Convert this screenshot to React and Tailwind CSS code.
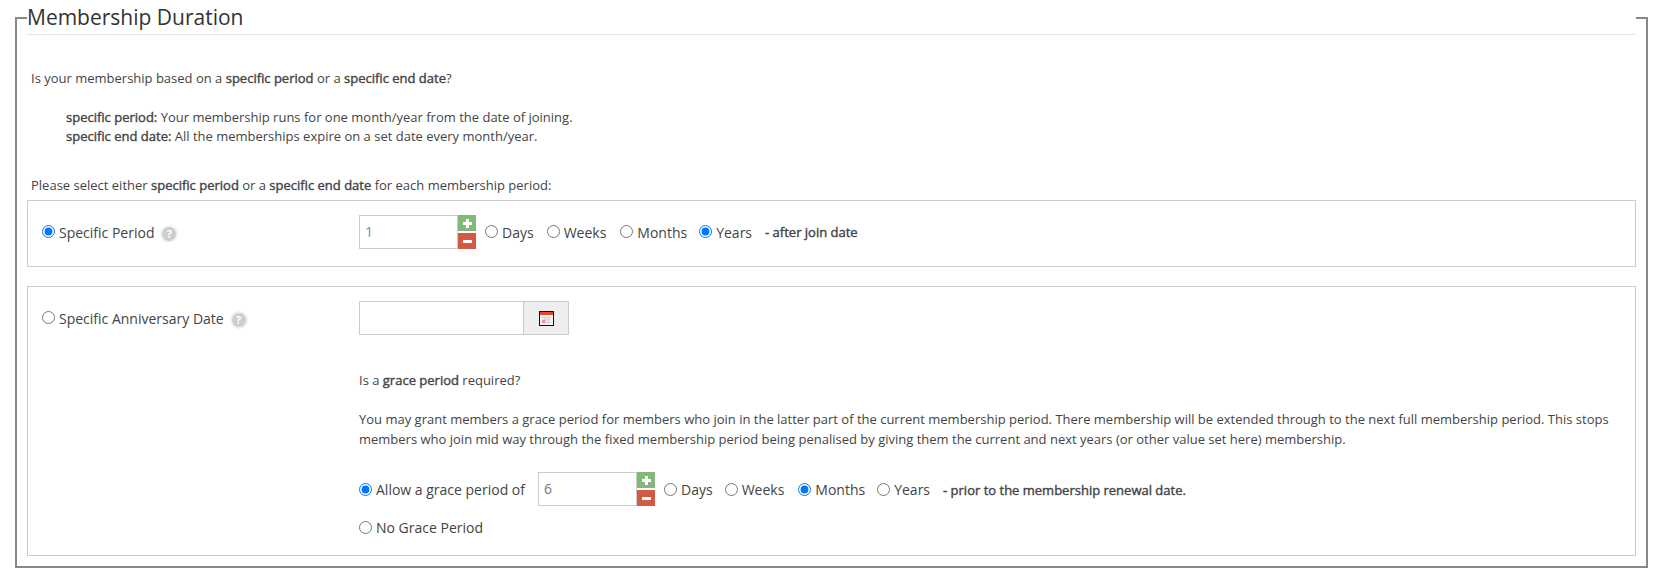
function Strong({ children }) {
  return <b className="font-normal [-webkit-text-stroke:0.4px_#444]">{children}</b>;
}

function Radio({ checked, name, label, className = '' }) {
  return (
    <label className={`flex items-center text-[14px] ${className}`}>
      <input type="radio" name={name} defaultChecked={checked} className="m-0 h-[13px] w-[13px] shrink-0" />
      <span className="ml-[4px] translate-y-px">{label}</span>
    </label>
  );
}

function Help() {
  return (
    <span className="ml-[6px] mt-[4px] flex h-[18px] w-[18px] items-center justify-center rounded-full bg-[#f1f1f1]">
      <span className="flex h-[14px] w-[14px] items-center justify-center rounded-full bg-[#cdcdcd] text-[11px] font-bold leading-none text-white">?</span>
    </span>
  );
}

function Spinner({ value, color }) {
  return (
    <div className="flex h-[34px]">
      <input readOnly value={value} className={`h-[34px] w-[99px] border border-[#ccc] pb-[2px] pl-[5px] text-[14px] outline-none ${color}`} />
      <div className="flex w-[18px] flex-col justify-between">
        <button className="flex h-[16px] items-center justify-center bg-[#85b67c]">
          <svg width="9" height="9" viewBox="0 0 9 9"><path d="M3 0h3v3h3v3H6v3H3V6H0V3h3z" fill="#fff" /></svg>
        </button>
        <button className="flex h-[16px] items-center justify-center bg-[#d25a44]">
          <svg width="9" height="3" viewBox="0 0 9 3"><rect width="9" height="3" fill="#fff" /></svg>
        </button>
      </div>
    </div>
  );
}

function CalendarIcon() {
  return (
    <svg width="15" height="15" viewBox="0 0 15 15" className="mt-px ml-px">
      <rect x="0.5" y="0.5" width="14" height="14" fill="#f4f4f4" stroke="#111" />
      <rect x="1" y="1" width="13" height="3" fill="#e8452a" />
      <path d="M3 6.5h9M3 9h9M3 11.5h9M6 5.5v7M9 5.5v7" stroke="#cfcfcf" strokeWidth="1" />
      <rect x="3" y="9" width="3" height="3" fill="#e89a90" />
    </svg>
  );
}

export default function App() {
  return (
    <div className="h-[581px] bg-white pl-[15px] pr-[14px] pt-px text-[13px] leading-[20px] text-[#444]" style={{ fontFamily: '"Open Sans", sans-serif' }}>
      <fieldset className="h-[567px] border-2 border-[#888] pl-[10px] pr-[10px]">
        <legend className="h-[34px] w-[1609px] border-b border-[#e5e5e5] text-[21px] leading-[32px] text-[#333]">Membership Duration</legend>

        <p className="ml-[4px] mt-[33px]">Is your membership based on a <Strong>specific period</Strong> or a <Strong>specific end date</Strong>?</p>
        <div className="ml-[39px] mt-[20px] leading-[19px]">
          <p><Strong>specific period:</Strong> Your membership runs for one month/year from the date of joining.</p>
          <p><Strong>specific end date:</Strong> All the memberships expire on a set date every month/year.</p>
        </div>
        <p className="ml-[4px] mt-[29px]">Please select either <Strong>specific period</Strong> or a <Strong>specific end date</Strong> for each membership period:</p>

        <div className="mt-[5px] flex h-[67px] w-[1609px] border border-[#ccc] pl-[14px] pt-[14px]">
          <div className="flex h-[33px] w-[317px] items-center">
            <Radio name="type" checked label="Specific Period" />
            <Help />
          </div>
          <Spinner value="1" color="text-[#6f8fb5]" />
          <div className="ml-[9px] flex h-[33px] items-center">
            <Radio name="unit" label="Days" className="mr-[13px]" />
            <Radio name="unit" label="Weeks" className="mr-[14px]" />
            <Radio name="unit" label="Months" className="mr-[12px]" />
            <Radio name="unit" checked label="Years" className="mr-[13px]" />
            <span className="mt-px"><Strong>- after join date</Strong></span>
          </div>
        </div>

        <div className="mt-[19px] h-[270px] w-[1609px] border border-[#ccc] pl-[14px] pr-[18px] pt-[14px]">
          <div className="flex">
            <div className="flex h-[33px] w-[317px] shrink-0 items-center">
              <Radio name="type" label="Specific Anniversary Date" />
              <Help />
            </div>
            <div className="min-w-0 flex-1">
              <div className="flex h-[34px] w-[210px] border border-[#ccc]">
                <input readOnly className="min-w-0 flex-1 outline-none" />
                <span className="flex w-[45px] items-center justify-center border-l border-[#ccc] bg-[#eee]"><CalendarIcon /></span>
              </div>
              <p className="mt-[35px]">Is a <Strong>grace period</Strong> required?</p>
              <p className="mt-[19px]">You may grant members a grace period for members who join in the latter part of the current membership period. There membership will be extended through to the next full membership period. This stops members who join mid way through the fixed membership period being penalised by giving them the current and next years (or other value set here) membership.</p>
              <div className="mt-[23px] flex h-[34px] items-center">
                <Radio name="grace" checked label="Allow a grace period of" className="mr-[13px]" />
                <Spinner value="6" color="text-[#777]" />
                <div className="ml-[9px] flex items-center">
                  <Radio name="graceUnit" label="Days" className="mr-[12px]" />
                  <Radio name="graceUnit" label="Weeks" className="mr-[14px]" />
                  <Radio name="graceUnit" checked label="Months" className="mr-[12px]" />
                  <Radio name="graceUnit" label="Years" className="mr-[13px]" />
                  <span className="mt-px"><Strong>- prior to the membership renewal date.</Strong></span>
                </div>
              </div>
              <Radio name="grace" label="No Grace Period" className="mt-[11px]" />
            </div>
          </div>
        </div>
      </fieldset>
    </div>
  );
}
